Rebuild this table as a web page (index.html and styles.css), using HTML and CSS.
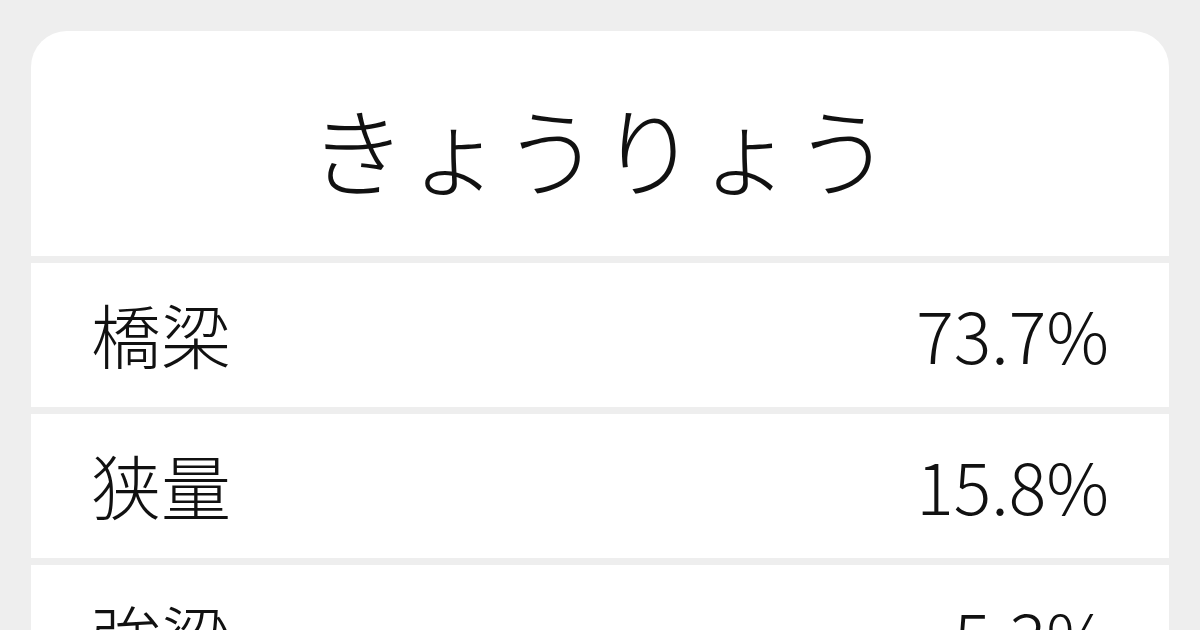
FILE: index.html
```html
<!DOCTYPE html>
<html lang="ja">
<head>
<meta charset="utf-8">
<link rel="stylesheet" href="styles.css">
</head>
<body>
<div class="page">
  <div class="card">
    <div class="title">きょうりょう</div>
    <div class="row"><span class="word">橋梁</span><span class="pct">73.7%</span></div>
    <div class="row"><span class="word">狭量</span><span class="pct">15.8%</span></div>
    <div class="row"><span class="word">強梁</span><span class="pct">5.3%</span></div>
  </div>
</div>
</body>
</html>
```
FILE: styles.css
```css
html, body {
  margin: 0;
  padding: 0;
  width: 1200px;
  height: 630px;
  overflow: hidden;
  background: #eeeeee;
}
.page {
  padding: 31px 31px 0 31px;
  font-family: "Noto Sans CJK JP", "Noto Sans", sans-serif;
  font-weight: 300;
  color: #111111;
}
.card {
  display: flex;
  flex-direction: column;
  gap: 7px;
  border-radius: 36px 36px 0 0;
  overflow: hidden;
}
.title {
  height: 225px;
  background: #ffffff;
  display: flex;
  align-items: center;
  justify-content: center;
  font-size: 97px;
  line-height: 1;
  padding-top: 6px;
  box-sizing: border-box;
}
.row {
  height: 144px;
  flex: 0 0 144px;
  background: #ffffff;
  display: flex;
  align-items: center;
  justify-content: space-between;
  padding: 0 60px 3px 60px;
  box-sizing: border-box;
  font-size: 70px;
  line-height: 1;
}
```
